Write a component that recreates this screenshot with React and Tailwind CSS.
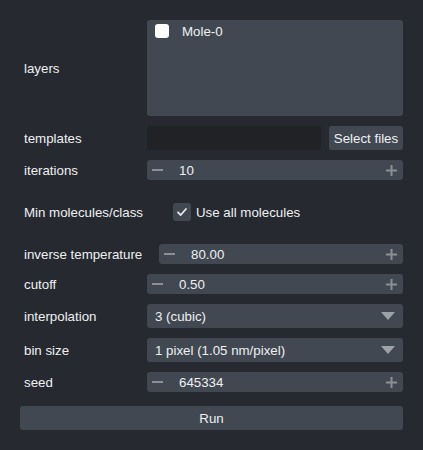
const font = { fontFamily: '"Liberation Sans", Arial, sans-serif' }

export default function App() {
  return (
    <div
      className="w-[423px] h-[450px] bg-[#262930] text-[#eef0f1] text-[13.3px] px-[20px] pt-[20px] flex flex-col"
      style={font}
    >
      <Row label="layers" className="h-[96px]">
        <div className="flex-1 h-full bg-[#414851] rounded-[3px] px-[8px] pt-[4px]">
          <div className="flex items-center h-[14px]">
            <div className="w-[14px] h-[14px] bg-white rounded-[3px]" />
            <span className="ml-[13px] leading-none pt-[1px]">Mole-0</span>
          </div>
        </div>
      </Row>

      <Row label="templates" className="h-[24px] mt-[10px]">
        <div className="w-[174px] h-full bg-[#202226] rounded-[3px]" />
        <button className="ml-[8px] flex-1 h-full bg-[#414851] rounded-[3px] text-center pt-[1px]">
          Select files
        </button>
      </Row>

      <Row label="iterations" className="h-[20px] mt-[10px]">
        <SpinBox value="10" />
      </Row>

      <Row label="Min molecules/class" labelWidth="w-[153px]" className="h-[18px] mt-[23px]">
        <div className="w-[18px] h-[18px] bg-[#414851] rounded-[3px] flex items-center justify-center">
          <svg viewBox="0 0 12 12" className="w-[12px] h-[12px]" fill="none" stroke="#e6e8ea" strokeWidth="1.8" strokeLinecap="round" strokeLinejoin="round">
            <path d="M2 6.3l2.7 2.7L10 3" />
          </svg>
        </div>
        <span className="ml-[5px] pt-[1px]">Use all molecules</span>
      </Row>

      <Row label="inverse temperature" labelWidth="w-[139px]" className="h-[20px] mt-[23px]">
        <SpinBox value="80.00" />
      </Row>

      <Row label="cutoff" className="h-[20px] mt-[10px]">
        <SpinBox value="0.50" />
      </Row>

      <Row label="interpolation" className="h-[24px] mt-[10px]">
        <Combo value="3 (cubic)" />
      </Row>

      <Row label="bin size" className="h-[24px] mt-[10px]">
        <Combo value="1 pixel (1.05 nm/pixel)" />
      </Row>

      <Row label="seed" className="h-[20px] mt-[10px]">
        <SpinBox value="645334" />
      </Row>

      <button className="mt-[14px] h-[24px] w-full bg-[#414851] rounded-[3px] text-center pt-[1px]">
        Run
      </button>
    </div>
  )
}

function Row({ label, labelWidth = "w-[127px]", className, children }) {
  return (
    <div className={`flex items-center ${className}`}>
      <div className={`${labelWidth} shrink-0 pl-[4px] pt-[1px] whitespace-nowrap`}>{label}</div>
      {children}
    </div>
  )
}

function SpinBox({ value }) {
  return (
    <div className="flex-1 h-full bg-[#414851] rounded-[3px] flex items-center">
      <div className="w-[11px] h-[2px] bg-[#8b9097] ml-[5px]" />
      <span className="ml-[16px] flex-1 pt-[1px]">{value}</span>
      <svg viewBox="0 0 11 11" className="w-[11px] h-[11px] mr-[6px]">
        <rect x="0" y="4.5" width="11" height="2" fill="#8b9097" />
        <rect x="4.5" y="0" width="2" height="11" fill="#8b9097" />
      </svg>
    </div>
  )
}

function Combo({ value }) {
  return (
    <div className="flex-1 h-full bg-[#414851] rounded-[3px] flex items-center pl-[8px]">
      <span className="flex-1 pt-[1px]">{value}</span>
      <svg viewBox="0 0 14 8" className="w-[14px] h-[8px] mr-[8px]">
        <path d="M0 0h14L7 8z" fill="#9da2a8" />
      </svg>
    </div>
  )
}
